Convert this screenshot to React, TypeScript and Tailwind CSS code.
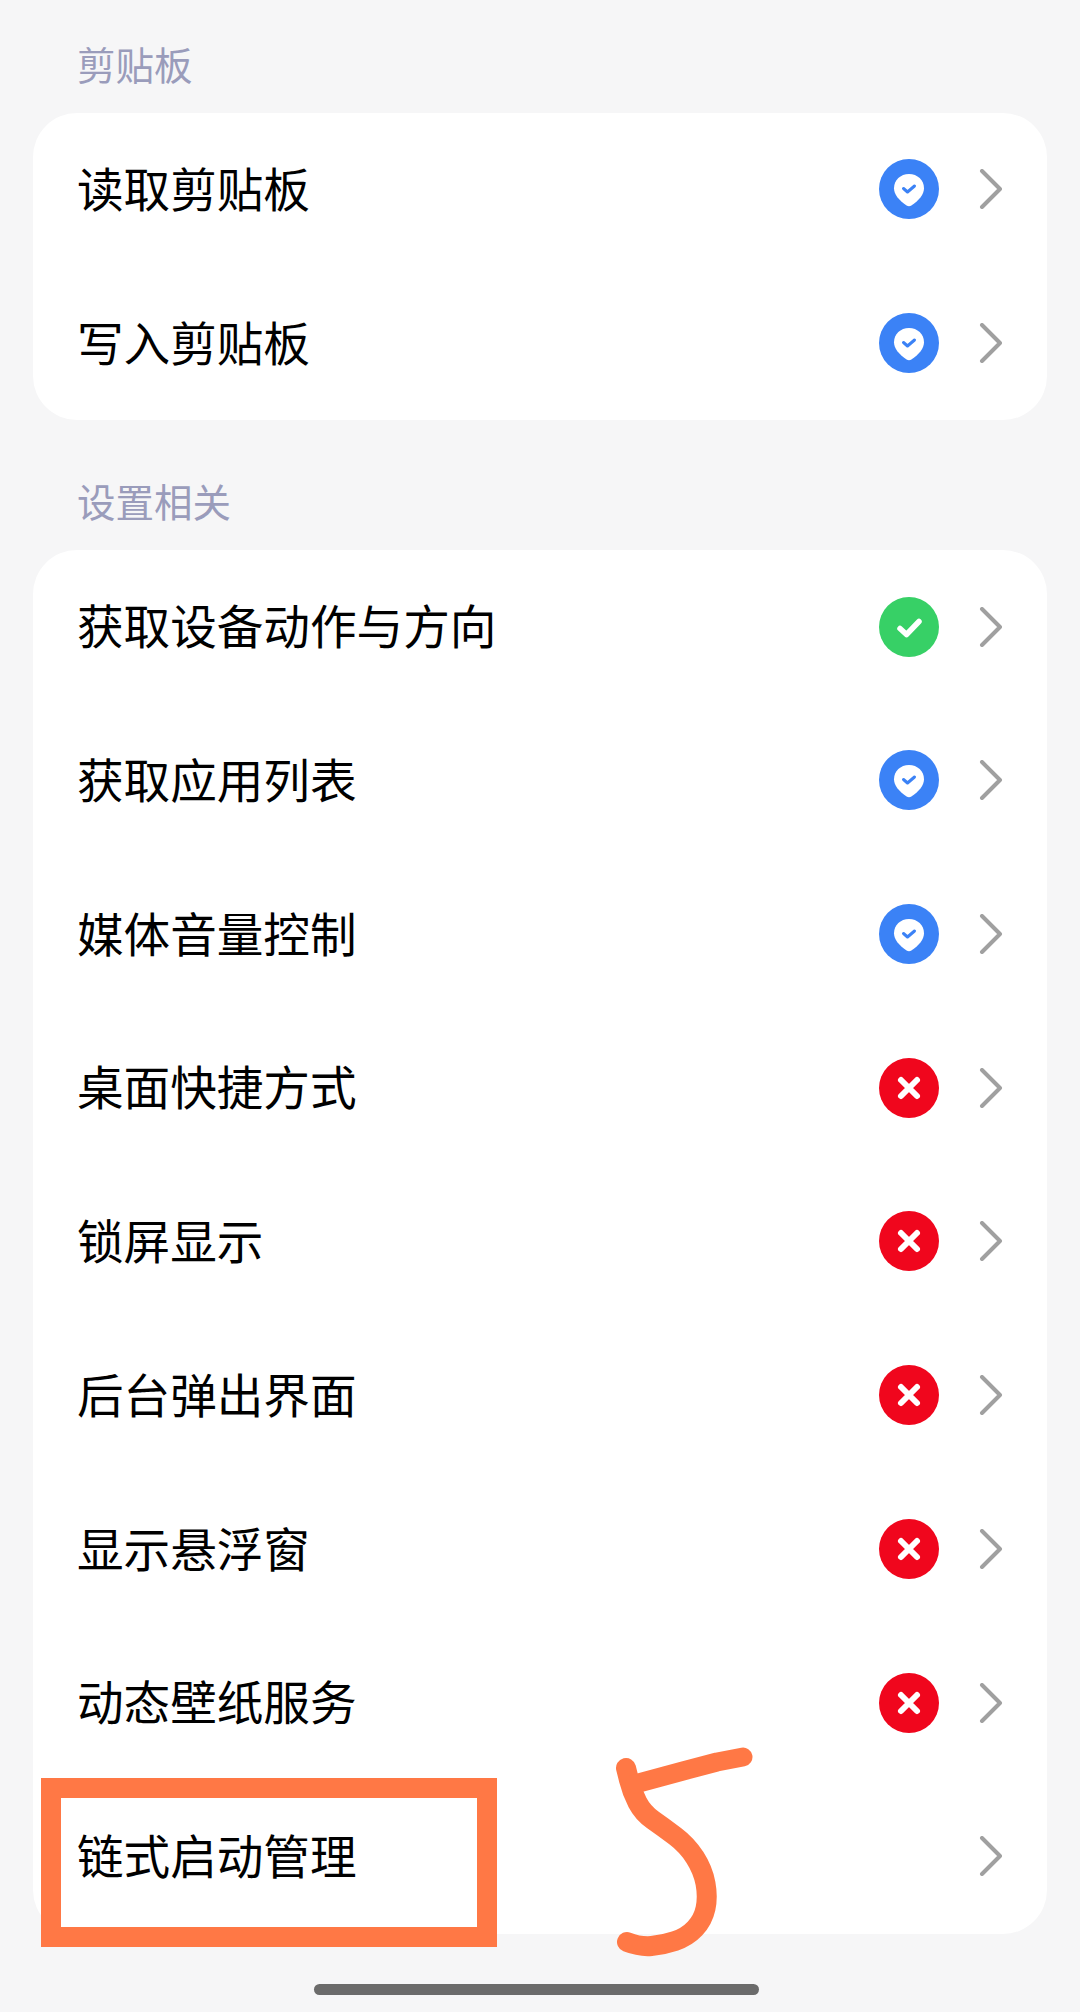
import React from "react";

type Status = "shield" | "ok" | "deny" | "none";

function StatusIcon({ status }: { status: Status }) {
  if (status === "none") return <div className="w-[60px] h-[60px]" />;
  if (status === "shield")
    return (
      <svg width="60" height="60" viewBox="0 0 60 60">
        <circle cx="30" cy="30" r="30" fill="#3b82f6" />
        <path d="M30 15c8.500 0 15 6.200 15 14.200 0 6.300-4.800 11.800-12.600 17.300-1.500 1-3.300 1-4.800 0C19.800 41 15 35.500 15 29.200 15 21.200 21.500 15 30 15z" fill="#fff" />
        <path d="M24.500 29.500l4 3.500 7-6" fill="none" stroke="#3b82f6" strokeWidth="3" strokeLinecap="round" strokeLinejoin="round" />
      </svg>
    );
  if (status === "ok")
    return (
      <svg width="60" height="60" viewBox="0 0 60 60">
        <circle cx="30" cy="30" r="30" fill="#37d066" />
        <path d="M21 31.500l6.500 6L40 24.500" fill="none" stroke="#fff" strokeWidth="5.500" strokeLinecap="round" strokeLinejoin="round" />
      </svg>
    );
  return (
    <svg width="60" height="60" viewBox="0 0 60 60">
      <circle cx="30" cy="30" r="30" fill="#f0061d" />
      <path d="M22 22l16 16M38 22L22 38" fill="none" stroke="#fff" strokeWidth="6" strokeLinecap="round" />
    </svg>
  );
}

function Row({ label, status }: { label: string; status: Status }) {
  return (
    <div className="h-[153.7px] flex items-center pl-[44px] pr-[44px] pb-[1px]">
      <span className="flex-1 pb-[4px] text-[46.6px] leading-none text-black">{label}</span>
      <StatusIcon status={status} />
      <svg className="ml-[40px]" width="24" height="40" viewBox="0 0 24 40">
        <path d="M3 2l18 18L3 38" fill="none" stroke="#a0a0a0" strokeWidth="4" strokeLinecap="round" strokeLinejoin="round" />
      </svg>
    </div>
  );
}

function Section({ title, top, rows }: { title: string; top: string; rows: [string, Status][] }) {
  return (
    <section>
      <div className={top}>
        <h2 className="h-[60px] flex items-center pl-[44px] pb-[4px] text-[38.500px] leading-none font-normal text-[#9a9cbb]">{title}</h2>
      </div>
      <div className="mt-[18px] bg-white rounded-[44px] overflow-hidden">
        {rows.map(([l, s]) => (
          <Row key={l} label={l} status={s} />
        ))}
      </div>
    </section>
  );
}

export default function App() {
  return (
    <div className="relative w-[1080px] h-[2012px] overflow-hidden bg-[#f6f6f7] px-[33px] font-['Noto_Sans_CJK_SC',sans-serif]">
      <Section
        title="剪贴板"
        top="pt-[35px]"
        rows={[
          ["读取剪贴板", "shield"],
          ["写入剪贴板", "shield"],
        ]}
      />
      <Section
        title="设置相关"
        top="mt-[52px]"
        rows={[
          ["获取设备动作与方向", "ok"],
          ["获取应用列表", "shield"],
          ["媒体音量控制", "shield"],
          ["桌面快捷方式", "deny"],
          ["锁屏显示", "deny"],
          ["后台弹出界面", "deny"],
          ["显示悬浮窗", "deny"],
          ["动态壁纸服务", "deny"],
          ["链式启动管理", "none"],
        ]}
      />
      <div className="mt-[50px] ml-[281px] w-[445px] h-[11px] rounded-full bg-[#6b6b6b]" />

      <div className="absolute left-[41px] top-[1778px] w-[456px] h-[169px] border-[20px] border-[#ff7845]" />
      <svg className="absolute left-[600px] top-[1730px]" width="170" height="240" viewBox="600 1730 170 240">
        <path
          d="M626 1768L629 1780Q632 1792 637.500 1802.500Q643 1813 653 1820Q663 1827 675 1836Q687 1845 695 1857.500Q703 1870 705.500 1883.500Q708 1897 705.500 1908.500Q703 1920 695 1928.500Q687 1937 675 1941Q663 1945 651.500 1946Q640 1947 627 1942"
          fill="none"
          stroke="#ff7845"
          strokeWidth="20"
          strokeLinecap="round"
          strokeLinejoin="round"
        />
        <path d="M635 1784L683 1771L717 1762L743 1757" fill="none" stroke="#ff7845" strokeWidth="19" strokeLinecap="round" strokeLinejoin="round" />
      </svg>
    </div>
  );
}
